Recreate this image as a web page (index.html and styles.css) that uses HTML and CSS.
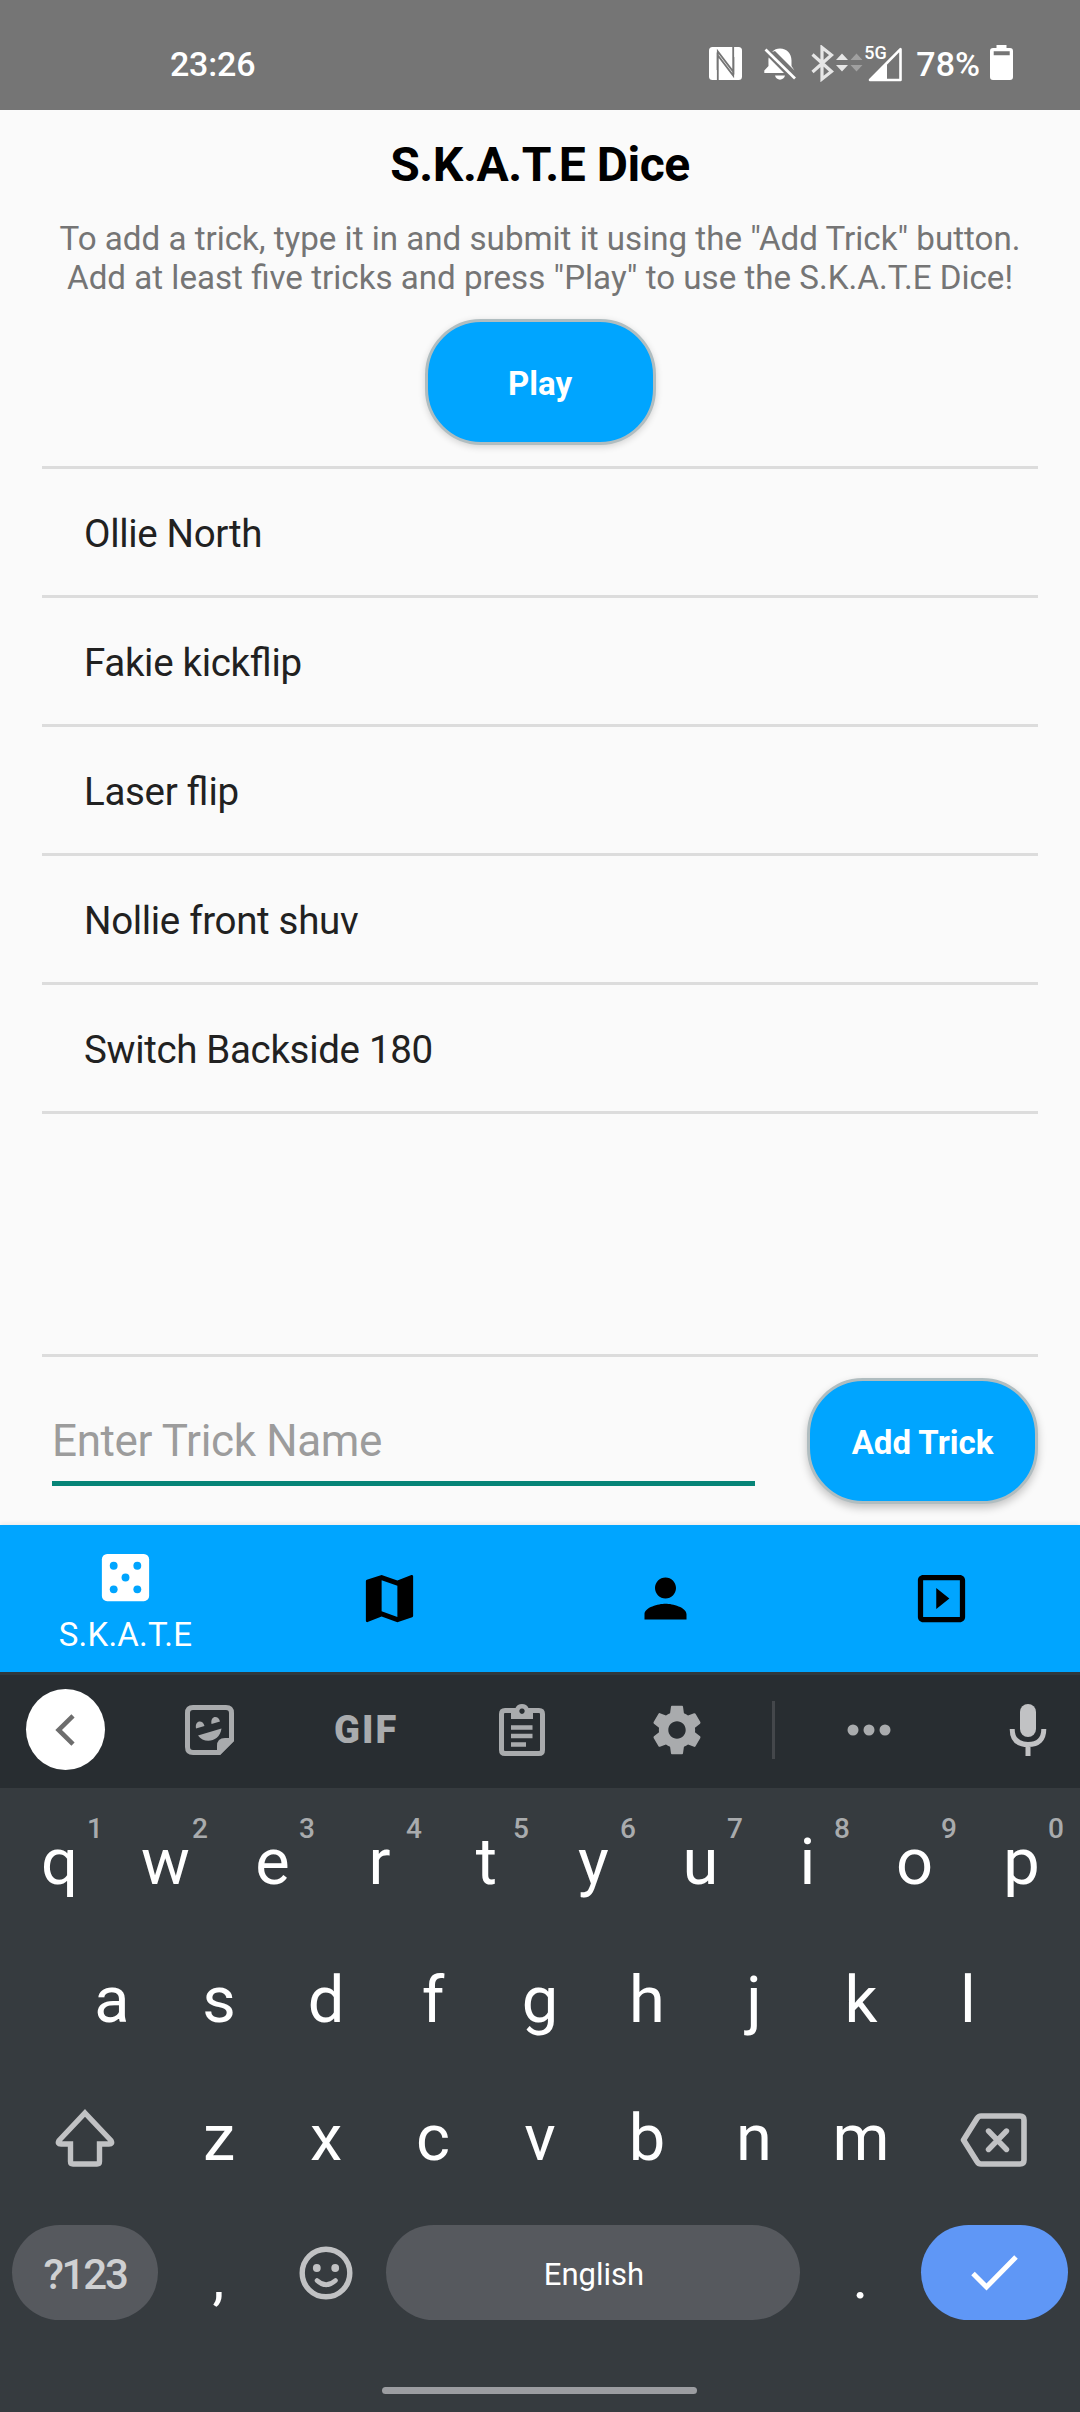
FILE: index.html
```html
<!DOCTYPE html>
<html lang="en">
<head>
<meta charset="utf-8">
<title>S.K.A.T.E Dice</title>
<link rel="stylesheet" href="styles.css">
</head>
<body>
<div class="screen">
  <header class="status">
    <span class="clock">23:26</span>
    <div class="status-icons">
      <svg class="nfc" width="33" height="33" viewBox="0 0 33 33"><rect width="33" height="33" rx="3.500" fill="#fff"/><path d="M8.800 33V4.500L24.500 25V10M24.200 0V28.500L8.500 8V23" fill="none" stroke="#757575" stroke-width="1.800"/></svg>
      <svg class="bell" width="33" height="33" viewBox="0 0 33 33"><path d="M8 4C10 1.500 13 .5 16 .5c7 0 11.500 5 11.500 12V18l3 4.500L11 3z" fill="#fff"/><path d="M4.700 9.500C4.300 11 4.500 13 4.500 18L.3 22.500V25H20zM11 27.500h10C20 33 12 33 11 27.500z" fill="#fff"/><path d="M1.500 1.500L31 30.500" stroke="#fff" stroke-width="2.700"/></svg>
      <svg class="bt" width="52" height="37" viewBox="0 0 52 37"><path d="M1.500 9.500L20.500 26.500 11 34V2.500L20.500 10 1.500 27" fill="none" stroke="#e6e6e6" stroke-width="3.200"/><path d="M25 15l6-6.500 6 6.500zM25 20h12l-6 6.500z" fill="#e6e6e6"/><path d="M39.500 15l6-6.500 6 6.500zM39.500 20h12l-6 6.500z" fill="#a0a0a0"/></svg>
      <div class="signal">
        <span>5G</span>
        <svg width="36" height="36" viewBox="0 0 36 36"><path d="M3 34L33.500 3.200V34z" fill="none" stroke="#fff" stroke-width="2.600" stroke-linejoin="round"/><path d="M3 34L20 17v17z" fill="#fff"/></svg>
      </div>
      <span class="percent">78%</span>
      <svg class="battery" width="23" height="35" viewBox="0 0 23 35"><path fill-rule="evenodd" fill="#fff" d="M6.500 0h10v3H20q3 0 3 3v26q0 3-3 3H3q-3 0-3-3V6q0-3 3-3h3.500zM3.700 6.200v4h16v-4z"/></svg>
    </div>
  </header>

  <main class="page">
    <h1>S.K.A.T.E Dice</h1>
    <p class="intro">To add a trick, type it in and submit it using the "Add Trick" button.<br>Add at least five tricks and press "Play" to use the S.K.A.T.E Dice!</p>
    <button class="btn play">Play</button>
    <ul class="tricks">
      <li>Ollie North</li>
      <li>Fakie kick<span class="lig">fl</span>ip</li>
      <li>Laser <span class="lig">fl</span>ip</li>
      <li>Nollie front shuv</li>
      <li>Switch Backside 180</li>
    </ul>
    <form class="entry">
      <input type="text" placeholder="Enter Trick Name">
      <button type="button" class="btn">Add Trick</button>
    </form>
  </main>

  <nav class="tabs">
    <a class="tab active">
      <svg width="63" height="63" viewBox="0 0 24 24"><path fill="#fff" d="M5 3h14a2 2 0 0 1 2 2v14a2 2 0 0 1-2 2H5a2 2 0 0 1-2-2V5a2 2 0 0 1 2-2z"/><g fill="#00a5ff"><circle cx="7.500" cy="7.500" r="1.500"/><circle cx="16.500" cy="7.500" r="1.500"/><circle cx="12" cy="12" r="1.500"/><circle cx="7.500" cy="16.500" r="1.500"/><circle cx="16.500" cy="16.500" r="1.500"/></g></svg>
      <span>S.K.A.T.E</span>
    </a>
    <a class="tab"><svg width="63" height="63" viewBox="0 0 24 24"><path d="M20.500 3l-.16.030L15 5.100 9 3 3.360 4.900c-.21.070-.36.250-.36.480V20.500c0 .28.220.5.500.5l.16-.030L9 18.900l6 2.100 5.640-1.900c.21-.07.360-.25.360-.48V3.500c0-.28-.22-.5-.5-.5zM15 19l-6-2.110V5l6 2.110V19z"/></svg></a>
    <a class="tab"><svg width="63" height="63" viewBox="0 0 24 24"><path d="M12 12c2.210 0 4-1.790 4-4s-1.790-4-4-4-4 1.790-4 4 1.790 4 4 4zm0 2c-2.670 0-8 1.340-8 4v2h16v-2c0-2.660-5.330-4-8-4z"/></svg></a>
    <a class="tab"><svg width="63" height="63" viewBox="0 0 24 24"><path d="M10 8v8l5-4-5-4zm9-5H5c-1.100 0-2 .9-2 2v14c0 1.100.9 2 2 2h14c1.100 0 2-.9 2-2V5c0-1.100-.9-2-2-2zm0 16H5V5h14v14z"/></svg></a>
  </nav>

  <section class="keyboard">
    <div class="tools">
      <span class="back"><svg width="20" height="32" viewBox="0 0 20 32"><path d="M18 1.800L3.600 16 18 30.200" fill="none" stroke="#6d6d6d" stroke-width="4.600"/></svg></span>
      <svg class="sticker" width="50" height="50" viewBox="0 0 50 50"><path d="M8 2.600H41q5.500 0 5.500 5.500V35L34 47.500H8q-5.500 0-5.500-5.500V8.100q0-5.500 5.500-5.500z" fill="none" stroke="#a9abad" stroke-width="5"/><path d="M32 49V41q0-8 8-8h9v3L35 50z" fill="#a9abad"/><path d="M11 23.500C9.500 15 18 14.500 19.500 21zM26.500 19C25 10.500 33.500 10 35 16.500zM13 30.500L36.500 23.500C35 37 19 39.500 13 30.500z" fill="#a9abad"/></svg>
      <span class="gif">GIF</span>
      <svg class="clip" width="46" height="53" viewBox="0 0 46 53"><path d="M12 7.500H6q-3.500 0-3.500 3.500v36q0 3.500 3.500 3.500h34q3.500 0 3.500-3.500V11q0-3.500-3.500-3.500H34" fill="none" stroke="#a9abad" stroke-width="5"/><path fill-rule="evenodd" fill="#a9abad" d="M12 5h4.500a7 6.500 0 0 1 13 0H34v11H12zM23 5.500a2.700 2.700 0 1 0 .01 0z"/><path d="M12 24.500h21.500M12 33h21.500M12 41.500h15" stroke="#a9abad" stroke-width="4.500"/></svg>
      <svg class="gear" width="58" height="58" viewBox="0 0 24 24"><path fill="#a9abad" d="M19.430 12.980c.04-.32.070-.64.070-.98s-.03-.66-.07-.98l2.110-1.650c.19-.15.240-.42.120-.64l-2-3.460c-.12-.22-.39-.3-.61-.22l-2.490 1c-.52-.4-1.080-.73-1.690-.98l-.38-2.650C14.460 2.180 14.250 2 14 2h-4c-.25 0-.46.180-.49.420l-.38 2.650c-.61.250-1.170.59-1.690.98l-2.490-1c-.23-.09-.49 0-.61.220l-2 3.460c-.13.220-.07.490.12.640l2.110 1.650c-.04.320-.07.650-.07.980s.03.660.07.980l-2.110 1.650c-.19.150-.24.420-.12.640l2 3.460c.12.220.39.300.61.220l2.490-1c.52.400 1.080.730 1.690.980l.38 2.650c.03.240.24.420.49.420h4c.25 0 .46-.18.490-.42l.38-2.650c.61-.25 1.170-.59 1.690-.98l2.490 1c.23.090.49 0 .61-.22l2-3.460c.12-.22.070-.49-.12-.64l-2.110-1.650zM12 15.600c-1.980 0-3.600-1.620-3.600-3.600s1.620-3.600 3.600-3.600 3.600 1.620 3.600 3.600-1.620 3.600-3.600 3.600z"/></svg>
      <i class="bar"></i>
      <svg class="dots" width="44" height="12" viewBox="0 0 44 12" fill="#a9abad"><circle cx="6" cy="6" r="5.500"/><circle cx="22" cy="6" r="5.500"/><circle cx="38" cy="6" r="5.500"/></svg>
      <svg class="mic" width="38" height="52" viewBox="0 0 38 52"><rect x="11" y="0" width="16" height="33" rx="8" fill="#c1c2c4"/><path d="M3.200 25q0 15.500 15.800 15.500T34.800 25M19 40v12" fill="none" stroke="#c1c2c4" stroke-width="5"/></svg>
    </div>

    <div class="row numbered">
      <kbd>q<sup>1</sup></kbd><kbd>w<sup>2</sup></kbd><kbd>e<sup>3</sup></kbd><kbd>r<sup>4</sup></kbd><kbd>t<sup>5</sup></kbd><kbd>y<sup>6</sup></kbd><kbd>u<sup>7</sup></kbd><kbd>i<sup>8</sup></kbd><kbd>o<sup>9</sup></kbd><kbd>p<sup>0</sup></kbd>
    </div>
    <div class="row">
      <kbd>a</kbd><kbd>s</kbd><kbd>d</kbd><kbd>f</kbd><kbd>g</kbd><kbd>h</kbd><kbd>j</kbd><kbd>k</kbd><kbd>l</kbd>
    </div>
    <div class="row">
      <kbd class="wide shift"><svg width="60" height="58" viewBox="0 0 60 58"><path d="M30 4L56 31.500Q58 35 54 35H44.500V52.500Q44.500 55 42 55H18Q15.500 55 15.500 52.500V35H6Q2 35 4 31.500z" fill="none" stroke="#c1c2c4" stroke-width="5.400"/></svg></kbd>
      <kbd>z</kbd><kbd>x</kbd><kbd>c</kbd><kbd>v</kbd><kbd>b</kbd><kbd>n</kbd><kbd>m</kbd>
      <kbd class="wide del"><svg width="67" height="54" viewBox="0 0 67 54"><path d="M21 3H60Q64 3 64 7V47Q64 51 60 51H21Q18.500 51 17 48.500L3.500 27 17 5.500Q18.500 3 21 3z" fill="none" stroke="#c1c2c4" stroke-width="5.600" stroke-linejoin="round"/><path d="M28.500 18L46.500 36.500M46.500 18L28.500 36.500" stroke="#c1c2c4" stroke-width="5.400" stroke-linecap="round"/></svg></kbd>
    </div>
    <div class="row bottom">
      <kbd class="pill sym">?123</kbd>
      <kbd class="punct">,</kbd>
      <kbd class="emoji"><svg width="54" height="54" viewBox="0 0 54 54"><circle cx="27" cy="27" r="23.800" fill="none" stroke="#c1c2c4" stroke-width="5.400"/><circle cx="17.800" cy="22" r="3.900" fill="#c1c2c4"/><circle cx="36.200" cy="22" r="3.900" fill="#c1c2c4"/><path d="M18 34.500Q27 43 36.500 34.500" fill="none" stroke="#c1c2c4" stroke-width="4.600" stroke-linecap="round"/></svg></kbd>
      <kbd class="pill space">English</kbd>
      <kbd class="punct dot">.</kbd>
      <kbd class="pill enter"><svg width="47" height="36" viewBox="0 0 47 36"><path d="M2 18.500L15.500 32 45 2" fill="none" stroke="#fff" stroke-width="5"/></svg></kbd>
    </div>
    <div class="handle"></div>
  </section>
</div>
</body>
</html>
```

FILE: styles.css
```css
* { box-sizing: border-box; }

body {
  margin: 0;
  font-family: Roboto, "Liberation Sans", sans-serif;
}

svg { display: block; flex: none; }

.screen {
  width: 1080px;
  height: 2412px;
  display: flex;
  flex-direction: column;
  overflow: hidden;
  background: #fafafa;
}

/* Status bar */
.status {
  height: 110px;
  flex: none;
  display: flex;
  justify-content: space-between;
  padding: 0 67px 0 170px;
  background: #757575;
  color: #fff;
  font-size: 34px;
  font-weight: 500;
  line-height: 129px;
}

.clock { letter-spacing: -.2px; }
.status-icons { display: flex; align-items: flex-start; }
.nfc { margin: 47px 22px 0 0; }
.bell { margin: 48px 14px 0 0; }
.bt { margin: 45px 4px 0 0; }
.signal { position: relative; margin: 46px 13px 0 0; }
.signal span {
  position: absolute;
  left: -3px;
  top: -4px;
  font-size: 18px;
  line-height: 22px;
}
.percent { margin-right: 10px; }
.battery { margin-top: 45px; }

/* Trick list page */
.page {
  height: 1415px;
  flex: none;
  display: flex;
  flex-direction: column;
  padding: 0 42px;
}

h1 {
  margin: 0;
  text-align: center;
  font-size: 48px;
  line-height: 110px;
  height: 109px;
  letter-spacing: -.45px;
  color: #000;
}

.intro {
  margin: 0 -20px;
  text-align: center;
  font-size: 33.150px;
  line-height: 39px;
  color: #757575;
}

.btn {
  width: 231px;
  height: 126px;
  flex: none;
  padding: 3px 0 0;
  border: 3px solid #b0bdc0;
  border-radius: 56px;
  background: #00a5ff;
  box-shadow: 0 4px 8px rgba(0, 0, 0, .22);
  color: #fff;
  font: bold 33px Roboto, "Liberation Sans", sans-serif;
}

.play { align-self: center; margin: 22px 0 21px; box-shadow: 0 2px 7px rgba(0, 0, 0, .16); }

.tricks {
  flex: 1;
  margin: 0;
  padding: 0;
  list-style: none;
  border-top: 3px solid #dcdcdc;
  border-bottom: 3px solid #dcdcdc;
}

.tricks li {
  height: 129px;
  padding: 2px 42px 0;
  border-bottom: 3px solid #dcdcdc;
  font-size: 38.500px;
  line-height: 126px;
  letter-spacing: -.33px;
  color: #212121;
}

/* Tracking disables ligatures, so the joined pair is set without it */
.lig { letter-spacing: 0; }

.entry {
  height: 168px;
  flex: none;
  display: flex;
  align-items: flex-start;
  justify-content: space-between;
  padding: 21px 0 0 10px;
}

.entry input {
  width: 703px;
  height: 85px;
  margin-top: 23px;
  padding: 0;
  border: 0;
  border-bottom: 5px solid #068477;
  outline: 0;
  background: none;
  font: 44px Roboto, "Liberation Sans", sans-serif;
  letter-spacing: -.36px;
}

.entry input::placeholder { color: #9c9c9c; }

/* Bottom navigation */
.tabs {
  height: 147px;
  flex: none;
  display: grid;
  grid-template-columns: 251px repeat(3, 276.300px);
  background: #00a5ff;
  box-shadow: 0 -2px 4px rgba(0, 0, 0, .06);
}

.tab {
  display: flex;
  flex-direction: column;
  align-items: center;
  padding-top: 42px;
  color: #fff;
  font-size: 33px;
  line-height: 40px;
}

.tab.active { padding-top: 21px; }
.tab span { margin-top: 6px; letter-spacing: .2px; }

/* Keyboard */
.keyboard {
  flex: 1;
  background: #363b3f;
  border-top: 3px solid #30383c;
}

.tools {
  height: 113px;
  margin-bottom: 5px;
  display: flex;
  align-items: center;
  padding-bottom: 4px;
  background: #282d31;
}

.back {
  width: 79px;
  height: 81px;
  display: flex;
  align-items: center;
  justify-content: center;
  margin: 0 80px 0 26px;
  padding-right: 2px;
  border-radius: 50%;
  background: #fff;
}

.gif {
  width: 66px;
  margin: 0 99px 0 99px;
  color: #a9abad;
  font-size: 38px;
  font-weight: 900;
  line-height: 40px;
  letter-spacing: 2px;
}

.clip { margin-right: 103px; }
.bar { width: 3px; height: 58px; margin: 0 72px 0 66px; background: #44474b; }
.dots { margin-right: 118px; }

.row { display: flex; height: 138px; justify-content: center; }

kbd {
  position: relative;
  width: 107px;
  flex: none;
  display: flex;
  align-items: center;
  justify-content: center;
  color: #fff;
  font: 65px/138px Roboto, "Liberation Sans", sans-serif;
}

kbd sup {
  position: absolute;
  left: 73px;
  top: 20px;
  width: 30px;
  text-align: center;
  color: #a9abad;
  font-size: 28px;
  font-weight: 500;
  line-height: 32px;
}

.numbered kbd:first-child { padding-left: 2px; }
.numbered kbd:first-child sup { left: 75px; }

.wide { width: 160.500px; }
.shift { justify-content: flex-start; }
.shift svg { margin-left: 50px; }
.del { justify-content: flex-start; padding-left: 45px; }
.del svg { margin-top: 4px; }

.bottom { justify-content: flex-start; padding: 18px 12px 25px; }
.bottom kbd { line-height: 95px; }

.pill { border-radius: 47.500px; background: #56595e; }
kbd.sym { width: 146px; color: #cfd0d2; font-size: 42px; font-weight: 500; padding-top: 4px; letter-spacing: -2.200px; }
kbd.punct { width: 121px; font-size: 60px; padding-top: 10px; }
kbd.emoji { width: 93px; margin-right: 14px; }
kbd.space { width: 414px; font-size: 31px; padding: 4px 0 0 2px; }
kbd.enter { width: 147px; background: #5f97f6; }

.handle {
  width: 315px;
  height: 7px;
  margin: 42px 0 0 382px;
  border-radius: 4px;
  background: #9c9da1;
}
```
